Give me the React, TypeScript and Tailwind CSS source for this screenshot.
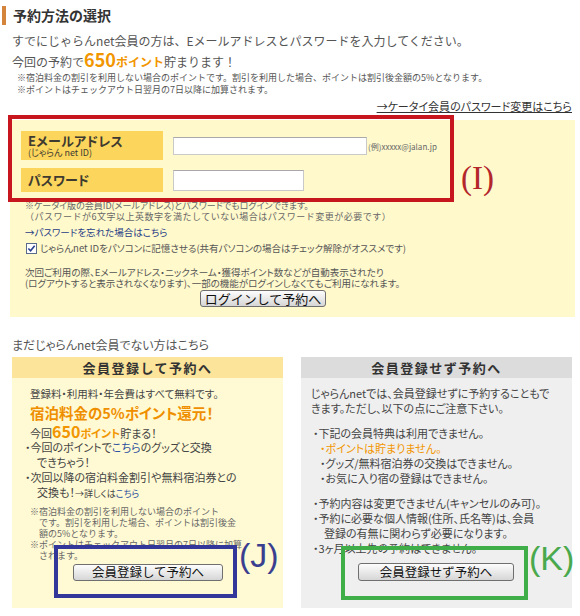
import type { ReactNode } from 'react';

const jp = "font-['Noto_Sans_CJK_JP','Noto_Sans',sans-serif]";
const palt = "[font-feature-settings:'palt']";

function GrayButton({ children, className = '' }: { children: ReactNode; className?: string }) {
  return (
    <button
      type="button"
      className={
        'flex items-center justify-center border border-[#6f6f6f] rounded-[3px] bg-linear-to-b from-[#fdfdfd] to-[#d6d6d6] leading-none text-[#111] ' +
        className
      }
    >
      {children}
    </button>
  );
}

function CheckedBox() {
  return (
    <span className="inline-flex w-[11px] h-[11px] border border-[#5a6b8c] bg-white items-center justify-center mr-[3px]">
      <svg viewBox="0 0 10 10" className="w-[9px] h-[9px]">
        <path d="M1.5 5 L4 7.5 L8.5 2" fill="none" stroke="#2a3f8f" strokeWidth="1.8" />
      </svg>
    </span>
  );
}

function LoginPanel() {
  return (
    <div className="relative ml-[10px] w-[565px] h-[197px] mt-[7px] bg-[#fff9cc] pt-[11px] pl-[11px]">
      <div className="flex items-start">
        <div className={'w-[142px] h-[29px] bg-[#fcd65c] pl-[7px] pt-[2px] text-[#3f3a30] ' + palt}>
          <div className="text-[13px] font-bold leading-[15px] tracking-[0.3px]">Eメールアドレス</div>
          <div className="text-[9px] leading-[10px]">(じゃらん net ID)</div>
        </div>
        <div className="ml-[10px] mt-[6px] w-[194px] h-[18px] bg-white border border-[#c9c9c9] border-t-[#a9a9a9]" />
        <div className="mt-[11px] ml-[1px] text-[8px] leading-[10px] text-[#666]">(例)xxxxx@jalan.jp</div>
      </div>
      <div className="flex items-start mt-[8px]">
        <div className={'w-[142px] h-[24px] bg-[#fcd65c] pl-[7px] text-[13px] font-bold leading-[24px] text-[#3f3a30] ' + palt}>
          パスワード
        </div>
        <div className="ml-[10px] mt-[2px] w-[131px] h-[21px] bg-white border border-[#c9c9c9] border-t-[#a9a9a9]" />
      </div>

      <div className="mt-[8px] pl-[4px] text-[9px] leading-[11px] text-[#666]">
        <div className={palt}>※ケータイ版の会員ID(メールアドレス)とパスワードでもログインできます。</div>
        <div className="tracking-[0.5px]">（パスワードが6文字以上英数字を満たしていない場合はパスワード変更が必要です）</div>
      </div>
      <div className={'mt-[4px] pl-[4px] text-[9.5px] leading-[13px] text-[#1f3d86] ' + palt}>
        →パスワードを忘れた場合はこちら
      </div>
      <div className={'mt-[3px] pl-[5px] flex items-center text-[9.5px] leading-[12px] text-[#555] ' + palt}>
        <CheckedBox />
        じゃらんnet IDをパソコンに記憶させる(共有パソコンの場合はチェック解除がオススメです)
      </div>
      <div className={'mt-[13px] pl-[4px] text-[9.5px] leading-[11px] text-[#555] ' + palt}>
        <div>次回ご利用の際、Eメールアドレス・ニックネーム・獲得ポイント数などが自動表示されたり</div>
        <div>(ログアウトすると表示されなくなります)、一部の機能がログインしなくてもご利用になれます。</div>
      </div>
      <div className="mt-[1px] pl-[179px]">
        <GrayButton className="w-[126px] h-[17px] text-[13px]">ログインして予約へ</GrayButton>
      </div>

      <div className="absolute left-[-2px] top-[-5px] w-[446px] h-[87px] border-[4px] border-[#c8161e]" />
      <div className="absolute left-[451px] top-[38px] font-['Liberation_Serif',serif] text-[33px] leading-[40px] text-[#b3262a]">
        (I)
      </div>
    </div>
  );
}

function MemberPanel() {
  return (
    <div className="relative w-[271px] h-[251px] bg-[#fffad3]">
      <div className="h-[21px] bg-[#fce49a] flex items-center justify-center text-[13px] font-bold text-[#333] tracking-[1.5px]">
        会員登録して予約へ
      </div>
      <div className={'pl-[18px] text-[#444] ' + palt}>
        <div className="mt-[9px] text-[10.5px] leading-[14px]">登録料・利用料・年会費はすべて無料です。</div>
        <div className="mt-[3px] text-[14.5px] font-bold leading-[18px] text-[#ef8f00]">宿泊料金の5%ポイント還元！</div>
        <div className="mt-[1px] h-[17px] text-[11px] leading-[17px]">
          今回<span className="text-[16px] font-bold leading-none text-[#f29600]">650</span>
          <span className="font-bold leading-none text-[#f29600]">ポイント</span>貯まる！
        </div>
        <div className="text-[11px] leading-[15px] -ml-[5px]">
          <div>・今回のポイントで<span className="text-[#2b4fa0]">こちら</span>のグッズと交換</div>
          <div className="pl-[12px]">できちゃう！</div>
          <div>・次回以降の宿泊料金割引や無料宿泊券との</div>
          <div className="pl-[12px]">
            交換も！<span className="text-[9px]">→詳しくは</span>
            <span className="text-[9px] text-[#2b4fa0]">こちら</span>
          </div>
        </div>
      </div>
      <div className="mt-[5px] pl-[18px] text-[9px] leading-[11px] text-[#666]">
        <div>※宿泊料金の割引を利用しない場合のポイント</div>
        <div className="pl-[9px]">です。割引を利用した場合、ポイントは割引後金</div>
        <div className="pl-[9px]">額の5%となります。</div>
        <div>※ポイントはチェックアウト日翌月の7日以降に加算</div>
        <div className="pl-[9px]">されます。</div>
      </div>
      <div className="mt-[3px] pl-[61px]">
        <GrayButton className="w-[150px] h-[17px] text-[12.5px]">会員登録して予約へ</GrayButton>
      </div>

      <div className="absolute left-[42px] top-[188px] w-[183px] h-[53px] border-[4px] border-[#34379a]" />
      <div className="absolute left-[227px] top-[178px] font-['Liberation_Sans',sans-serif] text-[34px] leading-[40px] text-[#3b3f90]">
        (J)
      </div>
    </div>
  );
}

function GuestPanel() {
  return (
    <div className="relative w-[271px] h-[251px] bg-[#efefef]">
      <div className="h-[21px] bg-[#dcdcdc] flex items-center justify-center text-[13px] font-bold text-[#333] tracking-[1.5px]">
        会員登録せず予約へ
      </div>
      <div className={'pl-[10px] pt-[8px] text-[11px] leading-[15px] text-[#444] ' + palt}>
        <div>じゃらんnetでは、会員登録せずに予約することもで</div>
        <div>きます。ただし、以下の点にご注意下さい。</div>
        <div className="mt-[10px] pl-[2px]">・下記の会員特典は利用できません。</div>
        <div className="pl-[9px] text-[#f29600]">・ポイントは貯まりません。</div>
        <div className="pl-[9px]">・グッズ/無料宿泊券の交換はできません。</div>
        <div className="pl-[9px]">・お気に入り宿の登録はできません。</div>
        <div className="mt-[10px] pl-[2px]">・予約内容は変更できません(キャンセルのみ可)。</div>
        <div className="pl-[2px]">・予約に必要な個人情報(住所、氏名等)は、会員</div>
        <div className="pl-[13px]">登録の有無に関わらず必要になります。</div>
        <div className="pl-[2px]">・3ヶ月以上先の予約はできません。</div>
      </div>
      <div className="absolute left-[57px] top-[206px]">
        <GrayButton className="w-[156px] h-[18px] text-[12.5px]">会員登録せず予約へ</GrayButton>
      </div>

      <div className="absolute left-[40px] top-[189px] w-[187px] h-[54px] border-[4px] border-[#3fae49]" />
      <div className="absolute left-[228px] top-[181px] font-['Liberation_Sans',sans-serif] text-[34px] leading-[40px] text-[#4aa94c]">
        (K)
      </div>
    </div>
  );
}

export default function App() {
  return (
    <div className={'w-[580px] h-[616px] bg-white overflow-hidden text-[#444] ' + jp}>
      <div className="flex items-center h-[19px] mt-[6px] ml-[2px]">
        <div className="w-[4px] h-[19px] bg-[#d5843b]" />
        <h1 className="ml-[7px] text-[14px] font-bold leading-[19px] text-[#333]">予約方法の選択</h1>
      </div>
      <p className="mt-[7px] pl-[12px] text-[12px] leading-[18px] text-[#555]">
        すでにじゃらんnet会員の方は、Eメールアドレスとパスワードを入力してください。
      </p>
      <p className="h-[20px] pl-[12px] text-[12px] leading-[20px] text-[#555]">
        今回の予約で<span className="text-[18px] font-bold leading-none text-[#f29600]">650</span>
        <span className="text-[12px] font-bold leading-none text-[#f29600]">ポイント</span>貯まります！
      </p>
      <div className="mt-[2px] pl-[17px] text-[9px] leading-[12px] text-[#555]">
        <div>※宿泊料金の割引を利用しない場合のポイントです。割引を利用した場合、ポイントは割引後金額の5%となります。</div>
        <div>※ポイントはチェックアウト日翌月の7日以降に加算されます。</div>
      </div>
      <div className={'mt-[3px] pr-[8px] text-right text-[11px] leading-[14px] text-[#333] ' + palt}>
        <span className="underline">→ケータイ会員のパスワード変更はこちら</span>
      </div>

      <LoginPanel />

      <p className={'mt-[21px] pl-[12px] text-[12px] leading-[14px] text-[#555] ' + palt}>まだじゃらんnet会員でない方はこちら</p>
      <div className="mt-[5px] ml-[12px] flex gap-[18px]">
        <MemberPanel />
        <GuestPanel />
      </div>
    </div>
  );
}
